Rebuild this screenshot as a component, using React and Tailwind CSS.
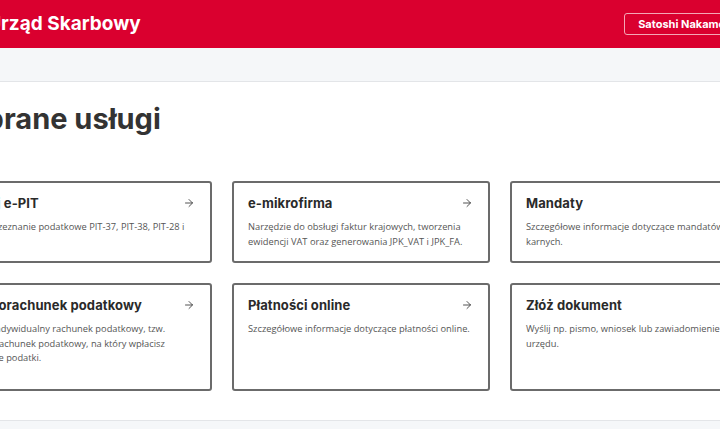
import { ArrowRight } from "lucide-react";

const services = [
  [
    {
      title: "Twój e-PIT",
      text: "Twoje zeznanie podatkowe PIT-37, PIT-38, PIT-28 i PIT-36",
    },
    {
      title: "e-mikrofirma",
      text: "Narzędzie do obsługi faktur krajowych, tworzenia ewidencji VAT oraz generowania JPK_VAT i JPK_FA.",
    },
    {
      title: "Mandaty",
      text: "Szczegółowe informacje dotyczące mandatów karnych.",
    },
  ],
  [
    {
      title: "Mikrorachunek podatkowy",
      text: "Twój indywidualny rachunek podatkowy, tzw. mikrorachunek podatkowy, na który wpłacisz należne podatki.",
    },
    {
      title: "Płatności online",
      text: "Szczegółowe informacje dotyczące płatności online.",
    },
    {
      title: "Złóż dokument",
      text: "Wyślij np. pismo, wniosek lub zawiadomienie do urzędu.",
    },
  ],
];

const heading = { fontFamily: "Inter, 'DejaVu Sans', sans-serif" };
const body = { fontFamily: "'Open Sans', 'Liberation Sans', sans-serif" };

function ServiceCard({ title, text }) {
  return (
    <a href="#" className="flex flex-col rounded-[3px] border-2 border-[#6b6b6b] bg-white px-[14px] pt-[12px] pb-[12px]">
      <div className="flex items-center justify-between">
        <span style={heading} className="text-[13px] leading-4 font-bold tracking-[0.1px] text-[#2a2a2a]">
          {title}
        </span>
        <ArrowRight className="mr-[1px] h-[12px] w-[12px] text-[#3a3a3a]" strokeWidth={1.75} />
      </div>
      <p style={body} className="mt-[9px] text-[9.3px] leading-[14.5px] text-[#555]">
        {text}
      </p>
    </a>
  );
}

export default function App() {
  return (
    <div className="h-[429px] w-[720px] overflow-hidden bg-white">
      <header className="h-12 bg-[#da002f]">
        <div className="ml-[-33px] flex h-full items-center justify-between">
          <span style={heading} className="text-[19px] font-bold text-white">
            e-Urząd Skarbowy
          </span>
          <button
            style={heading}
            className="mr-[-30px] h-[22px] rounded-[3px] border border-[#f4a7b6] px-[13px] text-[11px] font-bold text-white"
          >
            Satoshi Nakamoto
          </button>
        </div>
      </header>

      <div className="h-[34px] border-b border-[#e3e5e8] bg-[#f5f7f9]" />

      <main className="ml-[-46px] w-[816px]">
        <h2 style={heading} className="ml-[-16px] mt-[20px] text-[29px] leading-[34px] font-bold text-[#333]">
          Wybrane usługi
        </h2>

        <div className="mt-[45px] grid grid-cols-[258px_258px_258px] gap-x-[20px]">
          {services[0].map((s) => (
            <ServiceCard key={s.title} {...s} />
          ))}
        </div>
        <div className="mt-[20px] grid h-[108px] grid-cols-[258px_258px_258px] gap-x-[20px]">
          {services[1].map((s) => (
            <ServiceCard key={s.title} {...s} />
          ))}
        </div>
      </main>

      <div className="mt-[29px] h-20 border-t border-[#e3e5e8] bg-[#f5f7f9]" />
    </div>
  );
}
